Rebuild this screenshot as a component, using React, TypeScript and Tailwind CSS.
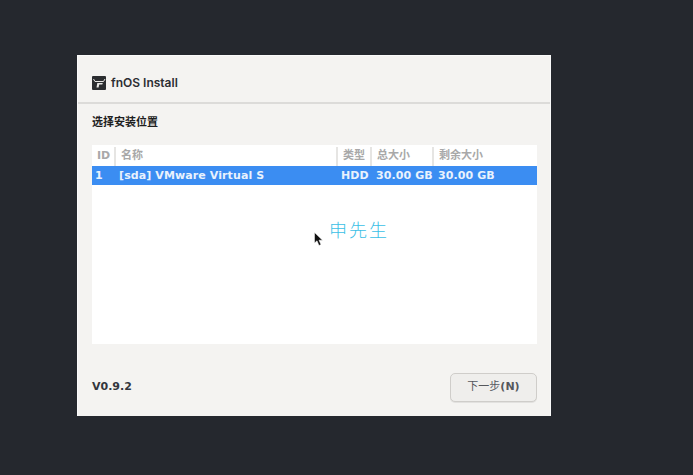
const cjk = "font-['DejaVu_Sans','Noto_Sans_CJK_SC',sans-serif]";

const columns = [
  { label: "ID", width: "w-[24px]", pad: "pl-[5px]" },
  { label: "名称", width: "w-[222px]", pad: "pl-[5px]" },
  { label: "类型", width: "w-[34px]", pad: "pl-[5px]" },
  { label: "总大小", width: "w-[62px]", pad: "pl-[5px]" },
  { label: "剩余大小", width: "flex-1", pad: "pl-[5px]" },
];

const cells = [
  { text: "1", width: "w-[24px]", pad: "pl-[3px]" },
  { text: "[sda] VMware Virtual S", width: "w-[222px]", pad: "pl-[3px]" },
  { text: "HDD", width: "w-[34px]", pad: "pl-[3px]" },
  { text: "30.00 GB", width: "w-[62px]", pad: "pl-[4px]" },
  { text: "30.00 GB", width: "flex-1", pad: "pl-[4px]" },
];

function Logo() {
  return (
    <svg width="14" height="14" viewBox="0 0 14 14" className="shrink-0">
      <rect width="14" height="14" rx="1" fill="#2b2d30" />
      <path d="M1.5 3 3 5.5H11.5L13 3" fill="none" stroke="#e8e7e5" strokeWidth="1" />
      <path d="M4.5 11.5 5.3 7H10.8L10.3 8.5H7.2L6.6 11.5Z" fill="#e8e7e5" />
    </svg>
  );
}

function Cursor() {
  return (
    <svg width="10" height="15" viewBox="0 0 10 15" className="absolute left-[222px] top-[87px]">
      <path d="M0.5 0.5V11L3 8.8 5 13.5 7 12.6 5 8.2H8.5Z" fill="#111" stroke="#fff" strokeWidth="0.5" />
    </svg>
  );
}

export default function App() {
  return (
    <div className={`h-[475px] w-[693px] overflow-hidden bg-[#25282e] pl-[77px] pt-[55px] ${cjk}`}>
      <div className="flex h-[361px] w-[474px] flex-col border-x border-t border-[#fafafa] bg-[#f4f3f1]">
        <div className="flex h-[48px] shrink-0 items-center gap-[5px] border-b-2 border-[#dcdbd9] pl-[14px] pt-[8px]">
          <Logo />
          <span className="font-['Inter','Noto_Sans',sans-serif] text-[12px] font-semibold text-[#2c2e33]">fnOS Install</span>
        </div>

        <div className="flex flex-1 flex-col pl-[14px] pr-[13px]">
          <h1 className="mt-[12px] text-[11px] leading-[14px] font-bold text-[#1e1e1e]">选择安装位置</h1>

          <div className="relative mt-[15px] h-[199px] w-[445px] bg-white">
            <div className="flex h-[21px] items-center pt-[1px]">
              {columns.map((col) => (
                <div
                  key={col.label}
                  className={`${col.width} ${col.pad} flex h-[19px] items-center border-r-2 border-[#e6e5e3] text-[11px] font-bold text-[#a8a8a8] last:border-r-0`}
                >
                  {col.label}
                </div>
              ))}
            </div>
            <div className="flex h-[19px] items-center bg-[#3b8df2] pt-[1px]">
              {cells.map((cell, i) => (
                <div
                  key={i}
                  className={`${cell.width} ${cell.pad} text-[11px] font-bold tracking-[0.1px] whitespace-nowrap text-[#e9f2fd]`}
                >
                  {cell.text}
                </div>
              ))}
            </div>
            <Cursor />
            <span className="absolute left-[237px] top-[72px] font-['Noto_Sans_CJK_SC',sans-serif] text-[18px] leading-[24px] font-light tracking-[2px] text-[#3bbfe6]">
              申先生
            </span>
          </div>

          <div className="mt-[29px] flex items-center justify-between">
            <span className="text-[11px] font-bold text-[#33363d]">V0.9.2</span>
            <button
              type="button"
              className="flex h-[29px] w-[87px] items-center justify-center rounded-[5px] border border-[#cfcdca] bg-[#efeeec] text-[11px] font-bold text-[#55575c] shadow-[0_1px_0_#e2e1df]"
            >
              <span className="font-normal">下一步</span>(N)
            </button>
          </div>
        </div>
      </div>
    </div>
  );
}
